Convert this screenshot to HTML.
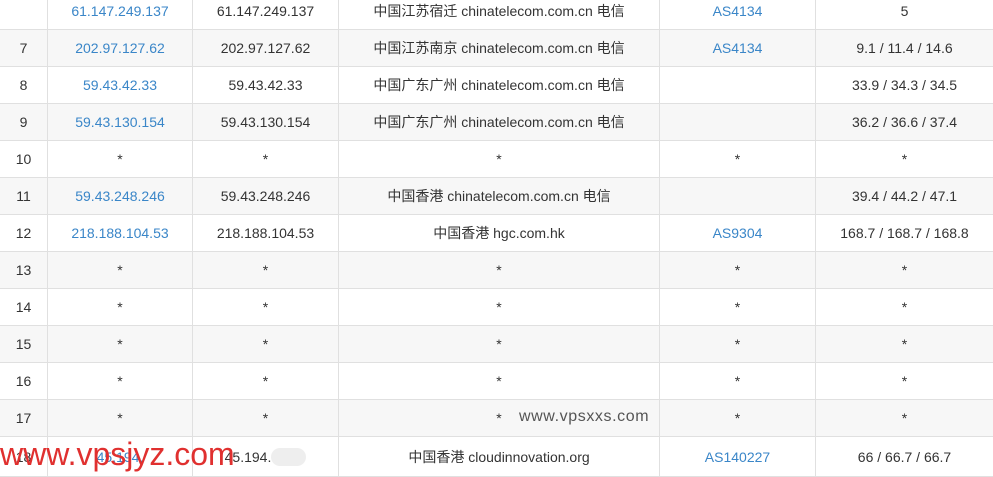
<!DOCTYPE html>
<html><head><meta charset="utf-8"><style>
body{margin:0;width:993px;height:470px;overflow:hidden;background:#fff;font-family:"Liberation Sans","Noto Sans CJK SC",sans-serif;font-size:14px;color:#333;position:relative}
.r{position:absolute;left:0;width:993px;height:37px;border-bottom:1px solid #e0e0e0;box-sizing:border-box}
.g{background:#f7f7f7}
.c{position:absolute;top:0;height:100%;display:flex;align-items:center;justify-content:center;border-right:1px solid #e0e0e0;box-sizing:border-box}
.c1{left:0;width:48px}.c2{left:48px;width:145px}.c3{left:193px;width:146px}.c4{left:339px;width:321px}.c5{left:660px;width:156px}.c6{left:816px;width:177px;border-right:none}
.l{color:#3a86c8}
</style></head><body>
<div class="r" style="top:-7px"><div class="c c1"></div><div class="c c2 l">61.147.249.137</div><div class="c c3">61.147.249.137</div><div class="c c4">中国江苏宿迁 chinatelecom.com.cn 电信</div><div class="c c5 l">AS4134</div><div class="c c6">5</div></div>
<div class="r g" style="top:30px"><div class="c c1">7</div><div class="c c2 l">202.97.127.62</div><div class="c c3">202.97.127.62</div><div class="c c4">中国江苏南京 chinatelecom.com.cn 电信</div><div class="c c5 l">AS4134</div><div class="c c6">9.1 / 11.4 / 14.6</div></div>
<div class="r" style="top:67px"><div class="c c1">8</div><div class="c c2 l">59.43.42.33</div><div class="c c3">59.43.42.33</div><div class="c c4">中国广东广州 chinatelecom.com.cn 电信</div><div class="c c5"></div><div class="c c6">33.9 / 34.3 / 34.5</div></div>
<div class="r g" style="top:104px"><div class="c c1">9</div><div class="c c2 l">59.43.130.154</div><div class="c c3">59.43.130.154</div><div class="c c4">中国广东广州 chinatelecom.com.cn 电信</div><div class="c c5"></div><div class="c c6">36.2 / 36.6 / 37.4</div></div>
<div class="r" style="top:141px"><div class="c c1">10</div><div class="c c2">*</div><div class="c c3">*</div><div class="c c4">*</div><div class="c c5">*</div><div class="c c6">*</div></div>
<div class="r g" style="top:178px"><div class="c c1">11</div><div class="c c2 l">59.43.248.246</div><div class="c c3">59.43.248.246</div><div class="c c4">中国香港 chinatelecom.com.cn 电信</div><div class="c c5"></div><div class="c c6">39.4 / 44.2 / 47.1</div></div>
<div class="r" style="top:215px"><div class="c c1">12</div><div class="c c2 l">218.188.104.53</div><div class="c c3">218.188.104.53</div><div class="c c4">中国香港 hgc.com.hk</div><div class="c c5 l">AS9304</div><div class="c c6">168.7 / 168.7 / 168.8</div></div>
<div class="r g" style="top:252px"><div class="c c1">13</div><div class="c c2">*</div><div class="c c3">*</div><div class="c c4">*</div><div class="c c5">*</div><div class="c c6">*</div></div>
<div class="r" style="top:289px"><div class="c c1">14</div><div class="c c2">*</div><div class="c c3">*</div><div class="c c4">*</div><div class="c c5">*</div><div class="c c6">*</div></div>
<div class="r g" style="top:326px"><div class="c c1">15</div><div class="c c2">*</div><div class="c c3">*</div><div class="c c4">*</div><div class="c c5">*</div><div class="c c6">*</div></div>
<div class="r" style="top:363px"><div class="c c1">16</div><div class="c c2">*</div><div class="c c3">*</div><div class="c c4">*</div><div class="c c5">*</div><div class="c c6">*</div></div>
<div class="r g" style="top:400px"><div class="c c1">17</div><div class="c c2">*</div><div class="c c3">*</div><div class="c c4">*</div><div class="c c5">*</div><div class="c c6">*</div></div>
<div class="r" style="top:437px;height:40px"><div class="c c1">18</div><div class="c c2 l">45.194.</div><div class="c c3">45.194.<span style="display:inline-block;width:35px;height:18px;background:#eee;border-radius:9px"></span></div><div class="c c4">中国香港 cloudinnovation.org</div><div class="c c5 l">AS140227</div><div class="c c6">66 / 66.7 / 66.7</div></div>
<div style="position:absolute;left:519px;top:408px;font-size:16px;color:#555;letter-spacing:0.6px">www.vpsxxs.com</div>
<div style="position:absolute;left:0px;top:437px;font-size:32px;color:#e0302f;line-height:34px">www.vpsjyz.com</div>
</body></html>
